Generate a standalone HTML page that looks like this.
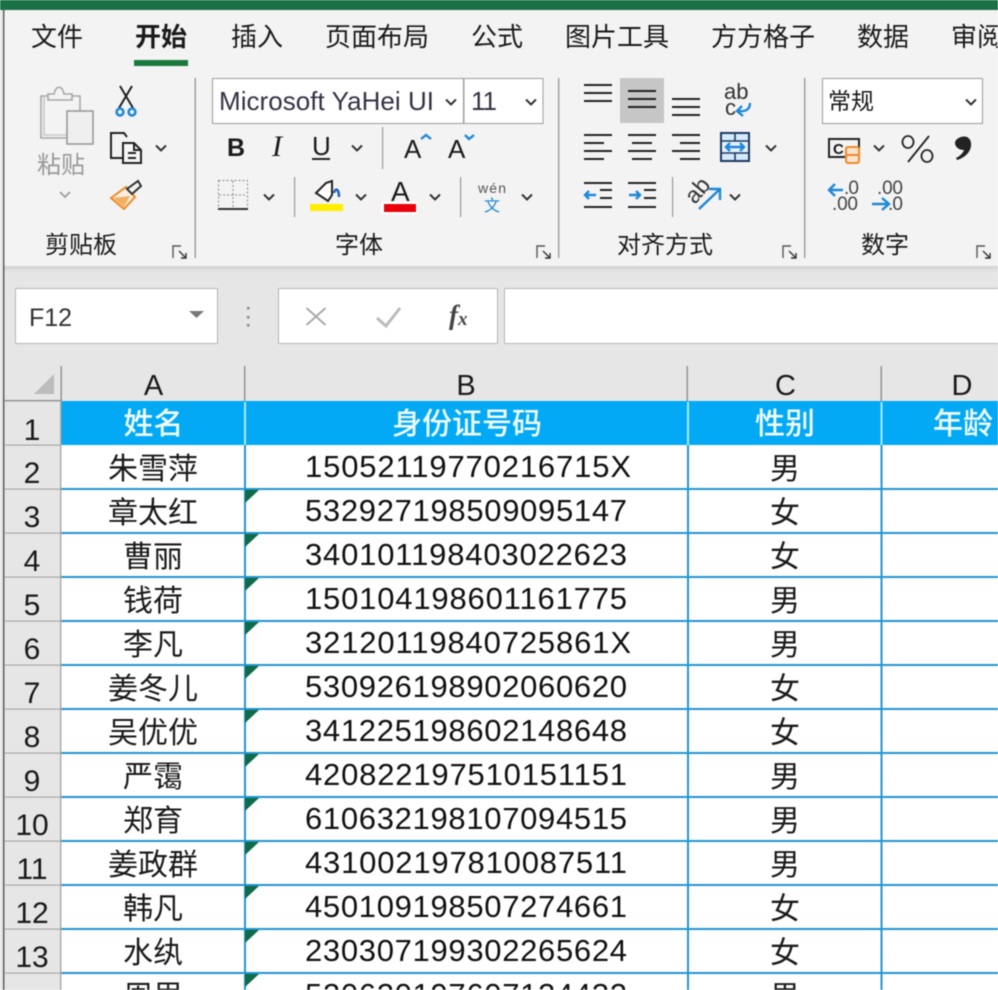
<!DOCTYPE html>
<html><head><meta charset="utf-8"><style>
html,body{margin:0;padding:0;width:998px;height:990px;overflow:hidden;background:#fff}
svg{display:block;filter:blur(.45px)}
text{font-family:"Liberation Sans","Noto Sans CJK SC",sans-serif;fill:#1a1a1a}
.cj{font-family:"Noto Sans CJK SC","Liberation Sans",sans-serif;font-weight:400}
.c{text-anchor:middle}
.n{font-size:31px;fill:#111}
.rn{font-size:30px;text-anchor:middle}
.g{font-size:24px}
.tab{font-size:26px}
.ic{fill:none;stroke:#222;stroke-width:2}
.bl{fill:none;stroke:#1e88d8;stroke-width:2.4}
</style></head><body>
<svg width="998" height="990" viewBox="0 0 998 990" xmlns="http://www.w3.org/2000/svg">
<defs>
<path id="ch" d="M-5 -2.5L0 2.5L5 -2.5" fill="none" stroke="#333" stroke-width="2"/>
<path id="tr" d="M245 0H259L245 13Z" fill="#0f6b4a"/>
<g id="lc" fill="none" stroke="#555" stroke-width="1.4"><path d="M0 13V1H8"/><path d="M6 6L13 13M13 8V13H8" stroke="#333"/></g>
</defs>

<!-- base -->
<rect width="998" height="990" fill="#e6e6e6"/>
<rect x="0" y="0" width="3" height="990" fill="#e8e8e8"/>
<rect x="3" y="10" width="995" height="256" fill="#f3f3f3"/>
<rect x="3" y="266" width="995" height="3" fill="#d6d6d6"/>
<rect x="3" y="269" width="995" height="3" fill="#e0e0e0"/>
<rect x="0" y="0" width="998" height="10" fill="#1a7145"/>
<rect x="3" y="10" width="1.4" height="980" fill="#555"/>

<!-- tabs -->
<text x="31" y="46" class="cj tab">文件</text>
<text x="135" y="46" class="cj tab" style="font-weight:700">开始</text>
<text x="231" y="46" class="cj tab">插入</text>
<text x="325" y="46" class="cj tab">页面布局</text>
<text x="471" y="46" class="cj tab">公式</text>
<text x="565" y="46" class="cj tab">图片工具</text>
<text x="711" y="46" class="cj tab">方方格子</text>
<text x="857" y="46" class="cj tab">数据</text>
<text x="951" y="46" class="cj tab">审阅</text>
<rect x="134" y="60" width="54" height="6" fill="#1a7a3e"/>

<!-- separators -->
<g fill="#9a9a9a">
<rect x="194.500" y="78" width="1.4" height="180"/>
<rect x="558" y="78" width="1.4" height="180"/>
<rect x="804" y="78" width="1.4" height="180"/>
<rect x="382" y="127" width="1.2" height="42"/>
<rect x="294" y="177" width="1.2" height="40"/>
<rect x="460" y="177" width="1.2" height="40"/>
<rect x="672" y="177" width="1.2" height="40"/>
</g>

<!-- clipboard -->
<g fill="none" stroke="#a8a8a8" stroke-width="1.6">
<path d="M67 96H80V138H41V96H48"/>
<path d="M44 96V135H67" stroke="#c8c8c8"/>
<path d="M48 100V94H54C56 85 62 85 64 94H72V100Z" fill="#f3f3f3"/>
<rect x="67" y="111" width="26" height="33" fill="#efefef" stroke="#999"/>
</g>
<text x="37" y="173" class="cj" style="font-size:24px;fill:#999">粘贴</text>
<path d="M60 192L65 197L70 192" fill="none" stroke="#999" stroke-width="1.6"/>
<!-- scissors -->
<path d="M120 86L133 108M132 86L119 108" class="ic" stroke-width="1.8"/>
<circle cx="120" cy="112" r="3.400" fill="none" stroke="#1e88d8" stroke-width="2.6"/>
<circle cx="132" cy="112" r="3.400" fill="none" stroke="#1e88d8" stroke-width="2.6"/>
<!-- copy -->
<path d="M122 158H111V133H124L127 137" class="ic"/>
<path d="M123 143H134L141 150V163H123Z" class="ic" style="fill:#f6f6f6"/>
<path d="M134 143V150H141M128 153H136M128 158H136" class="ic" stroke-width="1.4"/>
<use href="#ch" x="161" y="148"/>
<!-- format painter -->
<path d="M111 198L126 187L135 197L124 209Z" fill="#fbeee0" stroke="#ee8a2a" stroke-width="2"/>
<path d="M113 198L130 196L124 207Z" fill="#f4b062"/>
<path d="M127 189L132 194L141 186L138 181Z" fill="#f3f3f3" stroke="#333" stroke-width="2"/>
<text x="45" y="253" class="cj g">剪贴板</text>
<use href="#lc" x="173" y="245"/>

<!-- font group -->
<rect x="212.500" y="78.500" width="251" height="45" fill="#fff" stroke="#9c9c9c"/>
<rect x="464" y="78.500" width="79" height="45" fill="#fff" stroke="#9c9c9c"/>
<text x="219" y="110" textLength="215" style="font-size:26px;fill:#334">Microsoft YaHei UI</text>
<use href="#ch" x="451" y="102"/>
<text x="471" y="110" textLength="26" style="font-size:26px;fill:#334">11</text>
<use href="#ch" x="531" y="102"/>

<text x="227" y="156" style="font-size:25px;font-weight:700">B</text>
<text x="272" y="156" style="font-size:30px;font-style:italic;font-family:'Liberation Serif',serif">I</text>
<text x="312" y="155" style="font-size:26px">U</text>
<rect x="312" y="158" width="18" height="2" fill="#222"/>
<use href="#ch" x="357" y="148"/>
<text x="404" y="158" style="font-size:26px">A</text>
<path d="M421 139L426 135L431 139" class="bl" stroke-width="2"/>
<text x="448" y="158" style="font-size:26px">A</text>
<path d="M465 135L469 139L474 135" class="bl" stroke-width="2"/>

<!-- borders -->
<rect x="218.500" y="180.500" width="29" height="28" fill="none" stroke="#888" stroke-width="1" stroke-dasharray="2 2"/>
<path d="M233 181V208M219 195H247" fill="none" stroke="#888" stroke-width="1" stroke-dasharray="2 2"/>
<rect x="218" y="208" width="30" height="2" fill="#333"/>
<use href="#ch" x="269" y="197"/>
<!-- fill -->
<path d="M316 193L326 183L332 181V195L328 201Z" class="ic" style="fill:#fff"/>
<path d="M334 193C335 188 339 188 339 197" class="bl" style="stroke:#1760b8"/>
<rect x="310" y="204" width="33" height="7" fill="#ffee00"/>
<use href="#ch" x="361" y="197"/>
<!-- font colour -->
<text x="391" y="201" style="font-size:28px">A</text>
<rect x="381" y="202" width="37" height="12" rx="3" fill="#fff"/>
<rect x="384" y="204" width="32" height="8" fill="#e8000b"/>
<use href="#ch" x="435" y="197"/>
<!-- wen -->
<text x="478" y="193" textLength="28" style="font-size:14px;fill:#555">wén</text>
<text x="484" y="211" class="cj" style="font-size:16px;fill:#1e88d8">文</text>
<use href="#ch" x="527" y="197"/>
<text x="335" y="253" class="cj g">字体</text>
<use href="#lc" x="537" y="245"/>

<!-- alignment -->
<rect x="620" y="78" width="44" height="45" fill="#c6c6c6"/>
<g stroke="#222" stroke-width="2" fill="none">
<path d="M584 85H612M584 93H612M584 101H612"/>
<path d="M628 91H656M628 99H656M628 107H656"/>
<path d="M672 99H700M672 107H700M672 115H700"/>
<path d="M584 135H612M584 143H604M584 151H612M584 159H604"/>
<path d="M628 135H656M632 143H652M628 151H656M632 159H652"/>
<path d="M672 135H700M680 143H700M672 151H700M680 159H700"/>
<path d="M584 183H612M600 190H612M600 198H612M584 207H612"/>
<path d="M628 183H656M644 190H656M644 198H656M628 207H656"/>
</g>
<path d="M585 195H596M589 191L585 195L589 199" class="bl"/>
<path d="M629 195H640M636 191L640 195L636 199" class="bl"/>
<text x="724" y="99" style="font-size:22px;fill:#333">ab</text>
<text x="725" y="115" style="font-size:22px;fill:#333">c</text>
<path d="M750 103C750 110 745 112 737 111M742 106L737 111L743 116" class="bl"/>
<rect x="721" y="133" width="28" height="28" fill="#d6ebfa" stroke="#1f3a66" stroke-width="2"/>
<path d="M721 141H749M721 153H749M735 133V141M735 153V161" stroke="#1f3a66" stroke-width="1.6" fill="none"/>
<rect x="722" y="142" width="26" height="10" fill="#e4f1fb"/>
<path d="M726 147H744M730 143L726 147L730 151M740 143L744 147L740 151" class="bl"/>
<use href="#ch" x="771" y="148"/>
<text x="0" y="0" transform="translate(695 205) rotate(-50)" style="font-size:23px;fill:#333">ab</text>
<path d="M699 209L720 189M709 189H720V200" class="bl" stroke-width="2"/>
<use href="#ch" x="735" y="197"/>
<text x="617" y="253" class="cj g">对齐方式</text>
<use href="#lc" x="783" y="245"/>

<!-- number -->
<rect x="822.500" y="78.500" width="160" height="45" fill="#fff" stroke="#9c9c9c"/>
<text x="828" y="109" class="cj" style="font-size:23px">常规</text>
<use href="#ch" x="971" y="102"/>
<rect x="829" y="139" width="30" height="18" fill="none" stroke="#222" stroke-width="2"/>
<text x="833" y="154" textLength="20" style="font-size:15px;font-weight:700">Cr</text>
<rect x="846" y="147" width="13" height="16" rx="2" fill="#fbe2cc" stroke="#ee8a2a" stroke-width="2"/>
<path d="M846 155H859" stroke="#ee8a2a" stroke-width="2"/>
<use href="#ch" x="879" y="148"/>
<path d="M908 136a5.500 6 0 1 0 .01 0ZM927 150a5.500 6 0 1 0 .01 0ZM929 136L908 162" fill="none" stroke="#222" stroke-width="1.8"/>
<path d="M961 137C967 135 972 139 971 146C970 153 964 158 957 160L956 158C960 156 963 153 964 150C959 150 955 147 955 143C955 140 958 138 961 137Z" fill="#222"/>
<text x="844" y="194" textLength="15" style="font-size:19px;fill:#444">.0</text>
<text x="832" y="210" textLength="26" style="font-size:19px;fill:#444">.00</text>
<path d="M829 190H843M835 184L829 190L835 196" class="bl"/>
<text x="877" y="194" textLength="26" style="font-size:19px;fill:#444">.00</text>
<text x="888" y="210" textLength="15" style="font-size:19px;fill:#444">.0</text>
<path d="M872 204H888M882 198L889 204L882 210" class="bl"/>
<text x="861" y="253" class="cj g">数字</text>
<use href="#lc" x="977" y="245"/>

<!-- formula bar -->
<rect x="15.500" y="288.500" width="202" height="55" rx="1" fill="#fff" stroke="#b5b5b5"/>
<text x="29" y="326" style="font-size:25px;fill:#333">F12</text>
<path d="M189 311H204L196.500 318Z" fill="#777"/>
<g fill="#888"><rect x="247" y="307" width="2.500" height="2.500"/><rect x="247" y="316" width="2.500" height="2.500"/><rect x="247" y="324" width="2.500" height="2.500"/></g>
<rect x="278.500" y="288.500" width="219" height="55" rx="1" fill="#fff" stroke="#b5b5b5"/>
<path d="M306.500 308L325.500 325M325.500 308L306.500 325" fill="none" stroke="#aaa" stroke-width="2"/>
<path d="M377 318L386 326L400 308" fill="none" stroke="#bbb" stroke-width="3"/>
<text x="449" y="324" style="font-size:27px;font-style:italic;font-weight:700;font-family:'Liberation Serif',serif;fill:#444">f</text>
<text x="458" y="325" style="font-size:19px;font-style:italic;font-weight:700;font-family:'Liberation Serif',serif;fill:#444">x</text>
<rect x="504.500" y="288.500" width="500" height="55" rx="1" fill="#fff" stroke="#b5b5b5"/>

<!-- column headers -->
<path d="M54 374V394H34Z" fill="#bcbcbc"/>
<g fill="#8e8e8e">
<rect x="60.500" y="366" width="1.400" height="35"/>
<rect x="244" y="366" width="1.400" height="35"/>
<rect x="686.500" y="366" width="1.400" height="35"/>
<rect x="880.500" y="366" width="1.400" height="35"/>
<rect x="4" y="400" width="57" height="1.400"/>
</g>
<text x="153.500" y="395" class="c" style="font-size:29px">A</text>
<text x="466" y="395" class="c" style="font-size:29px">B</text>
<text x="785.500" y="395" class="c" style="font-size:29px">C</text>
<text x="962" y="395" class="c" style="font-size:29px">D</text>

<!-- sheet -->
<rect x="61" y="401" width="937" height="589" fill="#fff"/>
<rect x="61" y="401" width="937" height="44" fill="#03a9f4"/>
<g fill="#a8ecff">
<rect x="244" y="402" width="2" height="43"/>
<rect x="687" y="402" width="2" height="43"/>
<rect x="880.500" y="402" width="2" height="43"/>
</g>
<text x="153.500" y="434" class="cj c" style="font-size:30px;fill:#f0fbff;font-weight:500">姓名</text>
<text x="467" y="434" class="cj c" style="font-size:30px;fill:#f0fbff;font-weight:500">身份证号码</text>
<text x="785" y="434" class="cj c" style="font-size:30px;fill:#f0fbff;font-weight:500">性别</text>
<text x="963" y="434" class="cj c" style="font-size:30px;fill:#f0fbff;font-weight:500">年龄</text>
<!-- grid -->
<g fill="#2295d2">
<rect x="244" y="445" width="2" height="545"/>
<rect x="687" y="445" width="2" height="545"/>
<rect x="880.500" y="445" width="2" height="545"/>
<rect x="61" y="488" width="937" height="2"/>
<rect x="61" y="532" width="937" height="2"/>
<rect x="61" y="576" width="937" height="2"/>
<rect x="61" y="620" width="937" height="2"/>
<rect x="61" y="664" width="937" height="2"/>
<rect x="61" y="708" width="937" height="2"/>
<rect x="61" y="752" width="937" height="2"/>
<rect x="61" y="796" width="937" height="2"/>
<rect x="61" y="840" width="937" height="2"/>
<rect x="61" y="884" width="937" height="2"/>
<rect x="61" y="928" width="937" height="2"/>
<rect x="61" y="972" width="937" height="2"/>
</g>
<!-- row header separators -->
<g fill="#a8a8a8">
<rect x="60" y="401" width="1.400" height="589"/>
<rect x="4" y="444.500" width="57" height="1.200"/>
<rect x="4" y="488.500" width="57" height="1.200"/>
<rect x="4" y="532.500" width="57" height="1.200"/>
<rect x="4" y="576.500" width="57" height="1.200"/>
<rect x="4" y="620.500" width="57" height="1.200"/>
<rect x="4" y="664.500" width="57" height="1.200"/>
<rect x="4" y="708.500" width="57" height="1.200"/>
<rect x="4" y="752.500" width="57" height="1.200"/>
<rect x="4" y="796.500" width="57" height="1.200"/>
<rect x="4" y="840.500" width="57" height="1.200"/>
<rect x="4" y="884.500" width="57" height="1.200"/>
<rect x="4" y="928.500" width="57" height="1.200"/>
<rect x="4" y="972.500" width="57" height="1.200"/>
</g>
<!-- triangles -->
<use href="#tr" y="490"/><use href="#tr" y="534"/><use href="#tr" y="578"/><use href="#tr" y="622"/>
<use href="#tr" y="666"/><use href="#tr" y="710"/><use href="#tr" y="754"/><use href="#tr" y="798"/>
<use href="#tr" y="842"/><use href="#tr" y="886"/><use href="#tr" y="930"/><use href="#tr" y="974"/>

<!-- row numbers -->
<text x="32" y="440" class="rn">1</text>
<text x="32" y="483" class="rn">2</text>
<text x="32" y="527" class="rn">3</text>
<text x="32" y="571" class="rn">4</text>
<text x="32" y="615" class="rn">5</text>
<text x="32" y="659" class="rn">6</text>
<text x="32" y="703" class="rn">7</text>
<text x="32" y="747" class="rn">8</text>
<text x="32" y="791" class="rn">9</text>
<text x="32" y="835" class="rn">10</text>
<text x="32" y="879" class="rn">11</text>
<text x="32" y="923" class="rn">12</text>
<text x="32" y="967" class="rn">13</text>

<!-- names -->
<text x="153" y="479" class="cj c" style="font-size:30px">朱雪萍</text>
<text x="153" y="523" class="cj c" style="font-size:30px">章太红</text>
<text x="153" y="567" class="cj c" style="font-size:30px">曹丽</text>
<text x="153" y="611" class="cj c" style="font-size:30px">钱荷</text>
<text x="153" y="655" class="cj c" style="font-size:30px">李凡</text>
<text x="153" y="699" class="cj c" style="font-size:30px">姜冬儿</text>
<text x="153" y="743" class="cj c" style="font-size:30px">吴优优</text>
<text x="153" y="787" class="cj c" style="font-size:30px">严霭</text>
<text x="153" y="831" class="cj c" style="font-size:30px">郑育</text>
<text x="153" y="875" class="cj c" style="font-size:30px">姜政群</text>
<text x="153" y="919" class="cj c" style="font-size:30px">韩凡</text>
<text x="153" y="963" class="cj c" style="font-size:30px">水纨</text>
<text x="153" y="1007" class="cj c" style="font-size:30px">周里</text>

<!-- ids -->
<text x="305" y="477" class="n" textLength="326">15052119770216715X</text>
<text x="305" y="521" class="n" textLength="322">532927198509095147</text>
<text x="305" y="565" class="n" textLength="322">340101198403022623</text>
<text x="305" y="609" class="n" textLength="322">150104198601161775</text>
<text x="305" y="653" class="n" textLength="326">32120119840725861X</text>
<text x="305" y="697" class="n" textLength="322">530926198902060620</text>
<text x="305" y="741" class="n" textLength="322">341225198602148648</text>
<text x="305" y="785" class="n" textLength="322">420822197510151151</text>
<text x="305" y="829" class="n" textLength="322">610632198107094515</text>
<text x="305" y="873" class="n" textLength="322">431002197810087511</text>
<text x="305" y="917" class="n" textLength="322">450109198507274661</text>
<text x="305" y="961" class="n" textLength="322">230307199302265624</text>
<text x="305" y="1005" class="n" textLength="322">520620197607124432</text>

<!-- gender -->
<text x="785" y="479" class="cj c" style="font-size:30px">男</text>
<text x="785" y="523" class="cj c" style="font-size:30px">女</text>
<text x="785" y="567" class="cj c" style="font-size:30px">女</text>
<text x="785" y="611" class="cj c" style="font-size:30px">男</text>
<text x="785" y="655" class="cj c" style="font-size:30px">男</text>
<text x="785" y="699" class="cj c" style="font-size:30px">女</text>
<text x="785" y="743" class="cj c" style="font-size:30px">女</text>
<text x="785" y="787" class="cj c" style="font-size:30px">男</text>
<text x="785" y="831" class="cj c" style="font-size:30px">男</text>
<text x="785" y="875" class="cj c" style="font-size:30px">男</text>
<text x="785" y="919" class="cj c" style="font-size:30px">女</text>
<text x="785" y="963" class="cj c" style="font-size:30px">女</text>
<text x="785" y="1007" class="cj c" style="font-size:30px">男</text>
</svg>
</body></html>
